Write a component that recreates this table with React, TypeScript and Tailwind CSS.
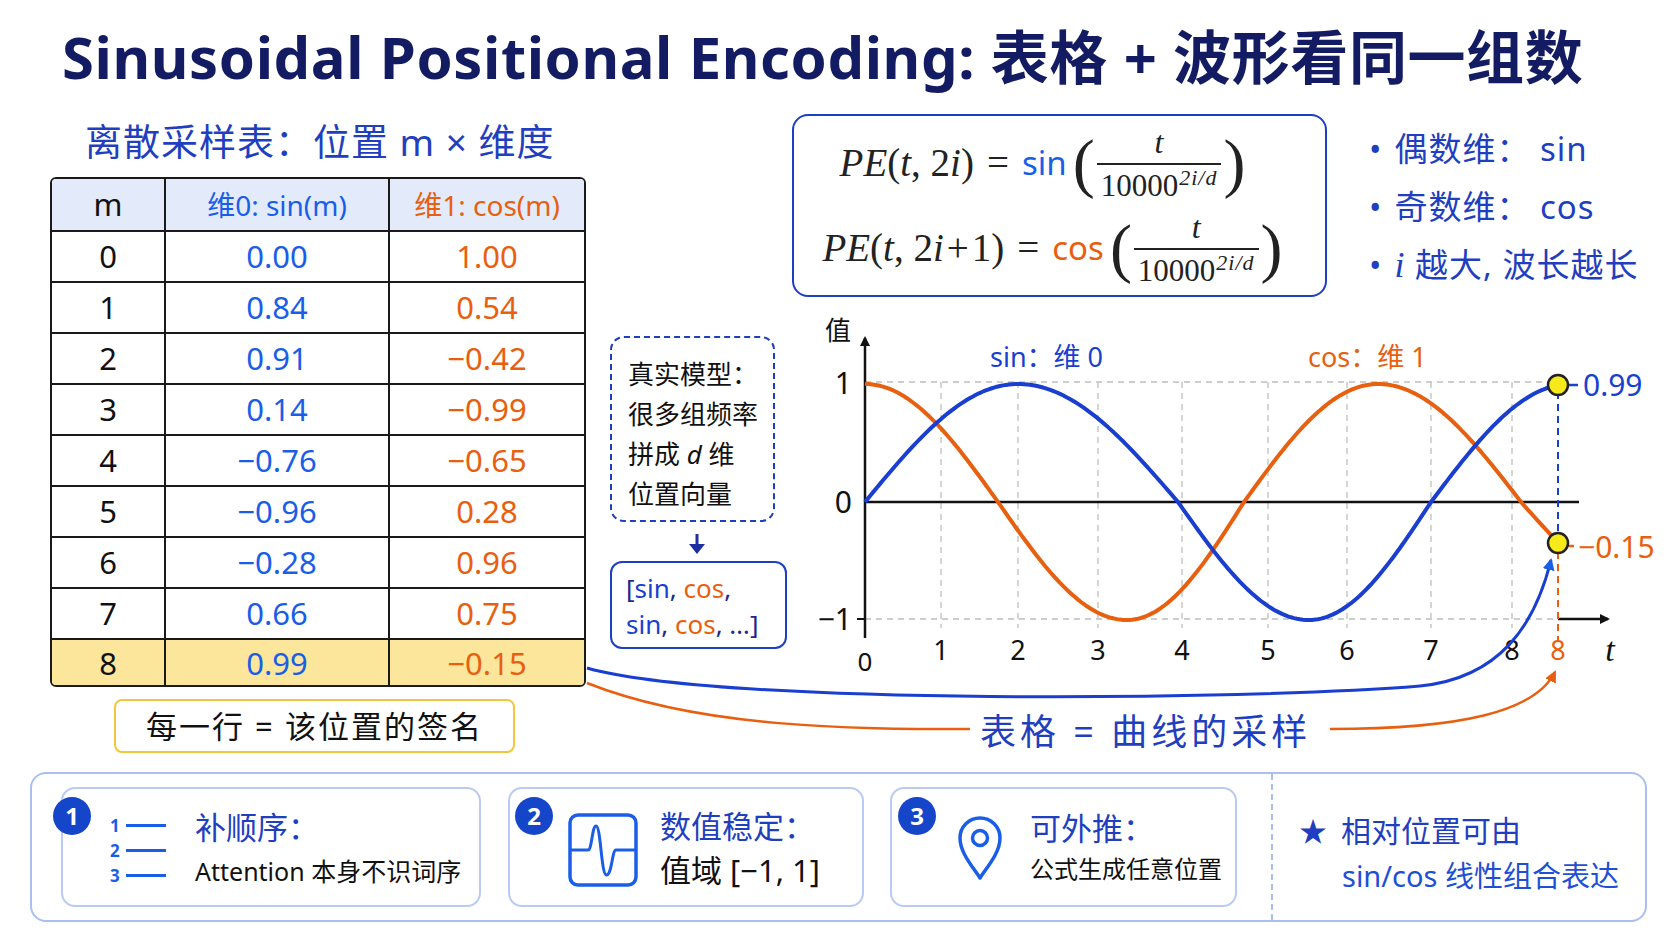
import React from 'react';

const rows = [
  ['0', '0.00', '1.00'],
  ['1', '0.84', '0.54'],
  ['2', '0.91', '−0.42'],
  ['3', '0.14', '−0.99'],
  ['4', '−0.76', '−0.65'],
  ['5', '−0.96', '0.28'],
  ['6', '−0.28', '0.96'],
  ['7', '0.66', '0.75'],
];

// phase keys [x, phase] so the drawn waves line up with the picture
const sinKeys = [[865, 0], [1018, Math.PI / 2], [1178, Math.PI], [1309, 1.5 * Math.PI], [1431, 2 * Math.PI], [1558, 2 * Math.PI + 1.43]];
const cosKeys = [[865, 0], [998, Math.PI / 2], [1127, Math.PI], [1244, 1.5 * Math.PI], [1378, 2 * Math.PI], [1521, 2.5 * Math.PI], [1558, 2.5 * Math.PI + 0.35]];

function phaseAt(keys: number[][], x: number) {
  for (let i = 0; i < keys.length - 1; i++) {
    const [x0, p0] = keys[i];
    const [x1, p1] = keys[i + 1];
    if (x <= x1) return p0 + ((x - x0) / (x1 - x0)) * (p1 - p0);
  }
  return keys[keys.length - 1][1];
}

function wave(keys: number[][], fn: (p: number) => number) {
  const pts: string[] = [];
  for (let x = 865; x < 1558; x += 3) pts.push(`${x},${(502 - 118 * fn(phaseAt(keys, x))).toFixed(1)}`);
  pts.push(`1558,${(502 - 118 * fn(phaseAt(keys, 1558))).toFixed(1)}`);
  return pts.join(' ');
}

function Frac() {
  return (
    <span className="mx-[2px] inline-flex flex-col items-center align-middle leading-none">
      <span className="pb-[5px] text-[32px] italic">t</span>
      <span className="border-t-2 border-[#222] px-[4px] pt-[5px] text-[31px]">
        10000<sup className="ml-[1px] text-[22px] italic tracking-[1px]">2i/d</sup>
      </span>
    </span>
  );
}

function Paren({ c }: { c: string }) {
  return <span className="inline-block align-middle text-[66px] font-light leading-none text-[#222]">{c}</span>;
}

function Chart() {
  const vx = [941, 1018, 1098, 1182, 1268, 1347, 1431, 1512];
  return (
    <svg width={872} height={383} viewBox="800 297 872 383" className="ml-[13px] shrink-0">
      <defs>
        <marker id="ax" markerWidth="10" markerHeight="10" refX="8" refY="5" orient="auto" markerUnits="userSpaceOnUse">
          <path d="M0,0 L10,5 L0,10 Z" fill="#111" />
        </marker>
      </defs>
      <line x1={865} y1={382} x2={1558} y2={382} stroke="#bdbdbd" strokeWidth={1.5} strokeDasharray="6 5" />
      <line x1={865} y1={619} x2={1558} y2={619} stroke="#bdbdbd" strokeWidth={1.5} strokeDasharray="6 5" />
      {vx.map((x) => (
        <line key={x} x1={x} y1={382} x2={x} y2={628} stroke="#c8c8c8" strokeWidth={1.5} strokeDasharray="6 5" />
      ))}
      <line x1={865} y1={502} x2={1579} y2={502} stroke="#111" strokeWidth={2.5} />
      <line x1={865} y1={638} x2={865} y2={338} stroke="#111" strokeWidth={2.5} markerEnd="url(#ax)" />
      <line x1={1558} y1={619} x2={1608} y2={619} stroke="#111" strokeWidth={2.5} markerEnd="url(#ax)" />
      <line x1={857} y1={619} x2={865} y2={619} stroke="#111" strokeWidth={2} />

      <text x={838} y={340} fontSize={26} textAnchor="middle" fill="#111">值</text>
      <text x={852} y={394} fontSize={30} textAnchor="end" fill="#111">1</text>
      <text x={852} y={513} fontSize={30} textAnchor="end" fill="#111">0</text>
      <text x={852} y={630} fontSize={30} textAnchor="end" fill="#111">−1</text>
      <text x={865} y={671} fontSize={26} textAnchor="middle" fill="#111">0</text>
      {vx.map((x, i) => (
        <text key={x} x={x} y={660} fontSize={27} textAnchor="middle" fill="#111">{i + 1}</text>
      ))}
      <text x={1558} y={660} fontSize={27} textAnchor="middle" fill="#e8600f">8</text>
      <text x={1610} y={661} fontSize={34} textAnchor="middle" fontStyle="italic" fontFamily="Liberation Serif, serif" fill="#111">t</text>

      <text x={990} y={367} fontSize={27} fill="#1a3fd0">sin：维 0</text>
      <text x={1308} y={367} fontSize={27} fill="#e8600f">cos：维 1</text>

      <polyline points={wave(cosKeys, Math.cos)} fill="none" stroke="#e8600f" strokeWidth={4} strokeLinejoin="round" />
      <polyline points={wave(sinKeys, Math.sin)} fill="none" stroke="#1a3fd0" strokeWidth={4} strokeLinejoin="round" />

      <line x1={1558} y1={392} x2={1558} y2={536} stroke="#1a3fd0" strokeWidth={2} strokeDasharray="7 5" />
      <line x1={1558} y1={552} x2={1558} y2={640} stroke="#e8600f" strokeWidth={2} strokeDasharray="7 5" />
      <line x1={1566} y1={385} x2={1578} y2={385} stroke="#1a3fd0" strokeWidth={2.5} />
      <line x1={1566} y1={546} x2={1574} y2={546} stroke="#e8600f" strokeWidth={2.5} />
      <circle cx={1558} cy={385} r={10} fill="#f6ea1a" stroke="#222" strokeWidth={2.5} />
      <circle cx={1558} cy={543} r={10} fill="#f6ea1a" stroke="#222" strokeWidth={2.5} />
      <text x={1583} y={396} fontSize={30} fill="#1a3fd0">0.99</text>
      <text x={1578} y={558} fontSize={30} fill="#e8600f">−0.15</text>
    </svg>
  );
}

function Connectors() {
  return (
    <svg className="pointer-events-none absolute inset-0" width={1672} height={941} viewBox="0 0 1672 941">
      <defs>
        <marker id="hb" markerWidth="14" markerHeight="14" refX="10" refY="6" orient="auto" markerUnits="userSpaceOnUse">
          <path d="M0,0 L12,6 L0,12 Z" fill="#1a5ee8" />
        </marker>
        <marker id="ho" markerWidth="14" markerHeight="14" refX="10" refY="6" orient="auto" markerUnits="userSpaceOnUse">
          <path d="M0,0 L12,6 L0,12 Z" fill="#e8600f" />
        </marker>
      </defs>
      <path d="M587 668 C 720 706, 1250 700, 1420 686 C 1500 678, 1535 625, 1551 560" fill="none" stroke="#1a3fd0" strokeWidth={3} markerEnd="url(#hb)" />
      <path d="M587 683 C 700 728, 850 729, 970 729" fill="none" stroke="#e8600f" strokeWidth={2.5} />
      <path d="M1330 729 C 1460 729, 1535 712, 1555 672" fill="none" stroke="#e8600f" strokeWidth={2.5} markerEnd="url(#ho)" />
    </svg>
  );
}

function Badge({ n, left }: { n: number; left: string }) {
  return (
    <div className={`absolute top-[8px] flex h-[38px] w-[38px] items-center justify-center rounded-full bg-[#1546c9] text-[24px] font-bold leading-none text-white ${left}`}>
      {n}
    </div>
  );
}

export default function App() {
  return (
    <div className="relative h-[941px] w-[1672px] overflow-hidden bg-white font-['Noto_Sans','Noto_Sans_CJK_SC',sans-serif]">
      <h1 className="h-[100px] pl-[62px] pt-[25px] text-[58px] font-bold leading-[64px] tracking-[0.6px] text-[#131b62]">
        Sinusoidal Positional Encoding: 表格 + 波形看同一组数
      </h1>

      <div className="flex h-[672px]">
        {/* left: table */}
        <div className="w-[586px] shrink-0 pl-[50px]">
          <h2 className="mt-[20px] pl-[35px] text-[37px] leading-[44px] tracking-[1px] text-[#1f3fc0]">离散采样表：位置 m × 维度</h2>
          <div className="mt-[13px] w-[536px] overflow-hidden rounded-[6px] border-2 border-[#1a1a1a]">
            <div className="grid h-[51px] grid-cols-[114px_224px_1fr] bg-[#e3ebfb]">
              <div className="flex items-center justify-center border-r-2 border-[#1a1a1a] text-[31px] text-[#111]">m</div>
              <div className="flex items-center justify-center border-r-2 border-[#1a1a1a] text-[28px] text-[#1a5ee8]">维0: sin(m)</div>
              <div className="flex items-center justify-center text-[28px] text-[#e8600f]">维1: cos(m)</div>
            </div>
            {rows.map((r) => (
              <div key={r[0]} className="grid h-[51px] grid-cols-[114px_224px_1fr] border-t-2 border-[#1a1a1a]">
                <div className="flex items-center justify-center border-r-2 border-[#1a1a1a] text-[31px] text-[#111]">{r[0]}</div>
                <div className="flex items-center justify-center border-r-2 border-[#1a1a1a] text-[31px] text-[#1a5ee8]">{r[1]}</div>
                <div className="flex items-center justify-center text-[31px] text-[#e8600f]">{r[2]}</div>
              </div>
            ))}
            <div className="grid h-[47px] grid-cols-[114px_224px_1fr] border-t-2 border-[#1a1a1a] bg-[#fbe69c]">
              <div className="flex items-center justify-center border-r-2 border-[#1a1a1a] text-[31px] text-[#111]">8</div>
              <div className="flex items-center justify-center border-r-2 border-[#1a1a1a] text-[31px] text-[#1a5ee8]">0.99</div>
              <div className="flex items-center justify-center text-[31px] text-[#e8600f]">−0.15</div>
            </div>
          </div>
          <div className="ml-[64px] mt-[12px] flex h-[54px] w-[401px] items-center justify-center rounded-[8px] border-2 border-[#f4c63c] text-[31px] tracking-[2px] text-[#111]">
            每一行 = 该位置的签名
          </div>
        </div>

        {/* right: formula, note, chart */}
        <div className="flex-1 pl-[24px]">
          <div className="ml-[182px] mt-[14px] flex">
            <div className="flex h-[183px] w-[535px] flex-col items-center justify-center gap-[10px] rounded-[16px] border-2 border-[#1d3fc4] font-['Liberation_Serif','DejaVu_Serif',serif] text-[39px] text-[#222]">
              <div className="flex items-center pr-[34px]">
                <span><i>PE</i>(<i>t</i>, 2<i>i</i>)</span>
                <span className="mx-[13px]">=</span>
                <span className="mr-[6px] font-['Noto_Sans',sans-serif] text-[33px] text-[#1a5ee8]">sin</span>
                <Paren c="(" />
                <Frac />
                <Paren c=")" />
              </div>
              <div className="flex items-center pr-[14px]">
                <span><i>PE</i>(<i>t</i>, 2<i>i</i><span className="mx-[3px]">+</span>1)</span>
                <span className="mx-[13px]">=</span>
                <span className="mr-[6px] font-['Noto_Sans',sans-serif] text-[33px] text-[#e8600f]">cos</span>
                <Paren c="(" />
                <Frac />
                <Paren c=")" />
              </div>
            </div>
            <ul className="ml-[42px] mt-[14px] flex flex-col gap-[16px] text-[33px] leading-[42px] tracking-[1px] text-[#1f3fc0]">
              <li className="flex gap-[12px]"><span>•</span><span>偶数维：&nbsp;sin</span></li>
              <li className="flex gap-[12px]"><span>•</span><span>奇数维：&nbsp;cos</span></li>
              <li className="flex gap-[12px]">
                <span>•</span>
                <span><i className="font-['Liberation_Serif',serif] text-[36px]">i</i> 越大, 波长越长</span>
              </li>
            </ul>
          </div>

          <div className="flex">
            <div className="w-[177px] shrink-0">
              <div className="mt-[39px] h-[186px] w-[165px] rounded-[14px] border-2 border-dashed border-[#1d3fb8] pl-[16px] pt-[16px] text-[26px] leading-[40px] text-[#111]">
                <div>真实模型：</div>
                <div className="whitespace-nowrap">很多组频率</div>
                <div>拼成 <i>d</i> 维</div>
                <div>位置向量</div>
              </div>
              <svg width={20} height={22} viewBox="0 0 20 22" className="ml-[77px] mt-[12px]">
                <line x1={10} y1={0} x2={10} y2={12} stroke="#1d2fa0" strokeWidth={3} />
                <path d="M2 10 L18 10 L10 20 Z" fill="#1d2fa0" />
              </svg>
              <div className="mt-[5px] h-[88px] w-[177px] rounded-[12px] border-2 border-[#1d3fc4] pl-[14px] pt-[7px] text-[26px] leading-[36px]">
                <div className="whitespace-nowrap"><span className="text-[#1d2a8a]">[</span><span className="text-[#1a3fd0]">sin</span><span className="text-[#1d2a8a]">, </span><span className="text-[#e8600f]">cos</span><span className="text-[#1d2a8a]">,</span></div>
                <div className="whitespace-nowrap"><span className="text-[#1a3fd0]">sin</span><span className="text-[#1d2a8a]">, </span><span className="text-[#e8600f]">cos</span><span className="text-[#1d2a8a]">, …]</span></div>
              </div>
            </div>
            <Chart />
          </div>

          <div className="ml-[370px] mt-[31px] text-[36px] leading-[42px] tracking-[4px] text-[#1f3fc0]">表格 = 曲线的采样</div>
        </div>
      </div>

      {/* bottom summary */}
      <div className="ml-[30px] flex h-[150px] w-[1617px] items-center rounded-[16px] border-2 border-[#a9bff2] pl-[29px]">
        <div className="relative flex h-[120px] w-[420px] shrink-0 rounded-[14px] border-2 border-[#b9cbf4] bg-white">
          <Badge n={1} left="left-[-10px]" />
          <div className="ml-[47px] mt-[26px] flex w-[58px] flex-col gap-[5px]">
            {[1, 2, 3].map((n) => (
              <div key={n} className="flex h-[20px] items-center gap-[4px]">
                <span className="w-[12px] text-[17px] font-bold leading-none text-[#1a5ee8]">{n}</span>
                <span className="h-[3px] w-[40px] bg-[#1a5ee8]" />
              </div>
            ))}
          </div>
          <div className="ml-[27px] mt-[18px] flex flex-col">
            <div className="text-[31px] leading-[40px] text-[#1f3fc0]">补顺序：</div>
            <div className="mt-[7px] whitespace-nowrap text-[25px] leading-[34px] text-[#111]">Attention 本身不识词序</div>
          </div>
        </div>

        <div className="relative ml-[27px] flex h-[120px] w-[356px] shrink-0 items-center rounded-[14px] border-2 border-[#b9cbf4] bg-white">
          <Badge n={2} left="left-[5px]" />
          <svg width={70} height={74} viewBox="0 0 70 74" className="ml-[58px] mt-[6px]">
            <rect x={2} y={2} width={66} height={70} rx={8} fill="none" stroke="#1a5ee8" strokeWidth={3.5} />
            <path d="M2 37 H20 C24 37 24 13 28 13 C33 13 33 62 38.5 62 C44 62 44 37 48 37 H68" fill="none" stroke="#1a5ee8" strokeWidth={3} />
          </svg>
          <div className="ml-[22px] flex flex-col">
            <div className="text-[31px] leading-[40px] text-[#1f3fc0]">数值稳定：</div>
            <div className="mt-[6px] text-[31px] leading-[36px] text-[#111]">值域 [−1, 1]</div>
          </div>
        </div>

        <div className="relative ml-[26px] flex h-[120px] w-[347px] shrink-0 items-center rounded-[14px] border-2 border-[#b9cbf4] bg-white">
          <Badge n={3} left="left-[6px]" />
          <svg width={48} height={68} viewBox="0 0 48 68" className="ml-[64px] mt-[2px]">
            <path d="M24 64 C17 53 4 39 4 24 A20 20 0 0 1 44 24 C44 39 31 53 24 64 Z" fill="none" stroke="#1a5ee8" strokeWidth={3.5} strokeLinejoin="round" />
            <circle cx={24} cy={24} r={7.5} fill="none" stroke="#1a5ee8" strokeWidth={3.5} />
          </svg>
          <div className="ml-[26px] flex flex-col">
            <div className="text-[31px] leading-[40px] text-[#1f3fc0]">可外推：</div>
            <div className="mt-[4px] whitespace-nowrap text-[24px] leading-[34px] text-[#111]">公式生成任意位置</div>
          </div>
        </div>

        <div className="ml-[34px] h-full border-l-2 border-dashed border-[#a9bff2]" />

        <div className="ml-[26px] mt-[12px] flex flex-col">
          <div className="flex items-center text-[30px] leading-[40px] text-[#1f3fc0]">
            <span className="mr-[14px] text-[28px]">★</span>相对位置可由
          </div>
          <div className="ml-[43px] mt-[6px] text-[29px] leading-[38px] text-[#1f4fd6]">sin/cos 线性组合表达</div>
        </div>
      </div>

      <Connectors />
    </div>
  );
}
